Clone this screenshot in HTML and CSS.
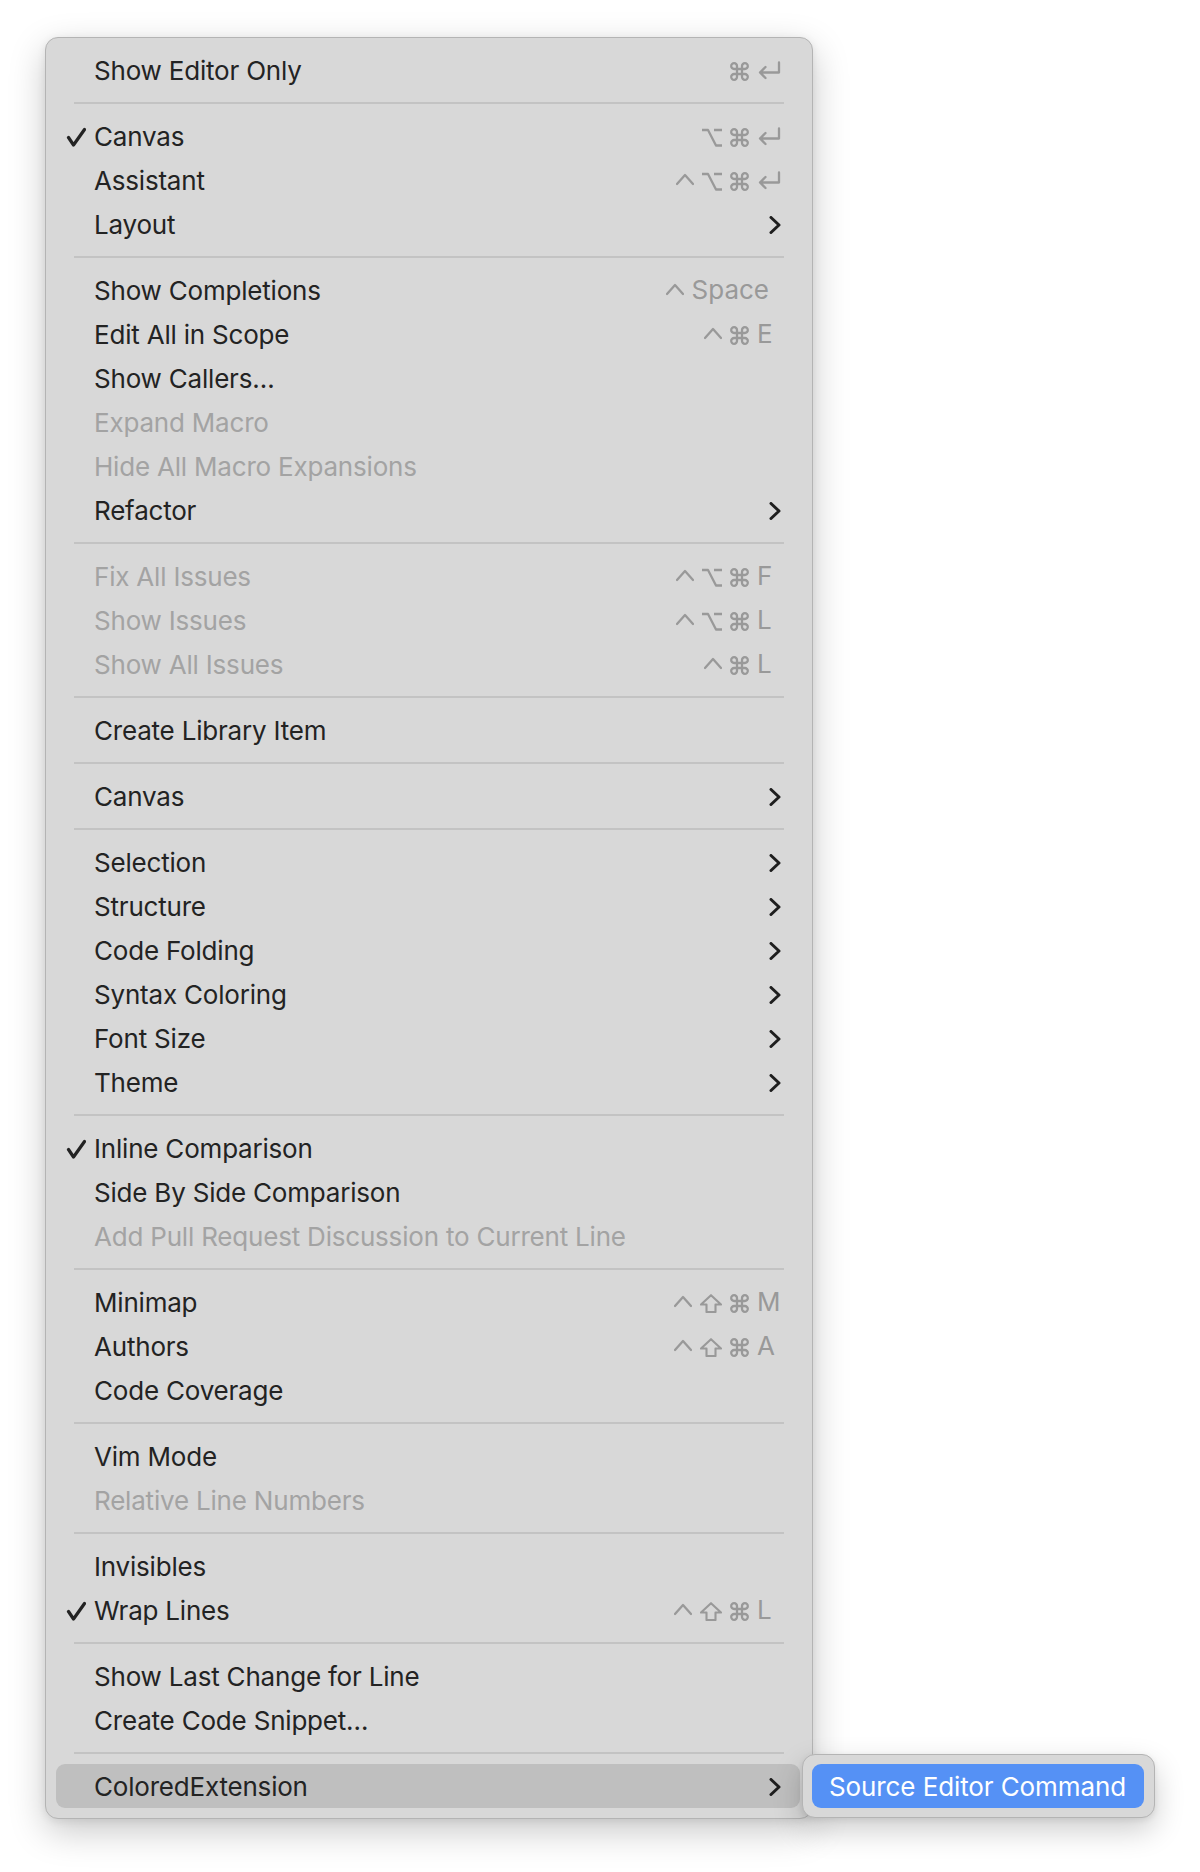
FILE: index.html
```html
<!DOCTYPE html>
<html lang="en">
<head>
  <meta charset="UTF-8">
  <title>Editor Menu</title>
  <link rel="stylesheet" href="styles.css">
</head>
<body>
  <svg width="0" height="0" class="defs">
    <defs>
      <symbol id="i-check" viewBox="0 0 20 20"><path d="M2.5 10.5 L7.5 18 L18.5 2.5" /></symbol>
      <symbol id="i-chev" viewBox="0 0 12 18"><path d="M2 1.5 L10 9 L2 16.5" /></symbol>
      <symbol id="i-ctrl" viewBox="0 0 18 19"><path d="M1 12 L9 3 L17 12" /></symbol>
      <symbol id="i-opt" viewBox="0 0 20 19"><path d="M0 2 H6 L14 17.5 H20 M12 2 H20" /></symbol>
      <symbol id="i-shift" viewBox="0 0 22 19"><path d="M11 1.2 L21 10.5 H15.5 V18 H6.5 V10.5 H1 Z" /></symbol>
      <symbol id="i-cmd" viewBox="0 0 19 19"><path d="M7 7 V4.2 A2.9 2.9 0 1 0 4.2 7 H14.8 A2.9 2.9 0 1 0 12 4.2 V14.8 A2.9 2.9 0 1 0 14.8 12 H4.2 A2.9 2.9 0 1 0 7 14.8 Z" /></symbol>
      <symbol id="i-ret" viewBox="0 0 24 19"><path d="M22 1.5 V11.5 H3 M8.5 6 L3 11.5 L8.5 17" /></symbol>
    </defs>
  </svg>

  <div class="page">
    <div class="menu">

      <div class="item"><span class="mark"></span><span class="label">Show Editor Only</span>
        <span class="keys"><svg class="k cmd"><use href="#i-cmd"/></svg><span class="key"><svg class="k ret"><use href="#i-ret"/></svg></span></span></div>
      <div class="sep"></div>

      <div class="item"><span class="mark"><svg class="check"><use href="#i-check"/></svg></span><span class="label">Canvas</span>
        <span class="keys"><svg class="k opt"><use href="#i-opt"/></svg><svg class="k cmd"><use href="#i-cmd"/></svg><span class="key"><svg class="k ret"><use href="#i-ret"/></svg></span></span></div>
      <div class="item"><span class="mark"></span><span class="label">Assistant</span>
        <span class="keys"><svg class="k ctrl"><use href="#i-ctrl"/></svg><svg class="k opt"><use href="#i-opt"/></svg><svg class="k cmd"><use href="#i-cmd"/></svg><span class="key"><svg class="k ret"><use href="#i-ret"/></svg></span></span></div>
      <div class="item"><span class="mark"></span><span class="label">Layout</span><svg class="chev"><use href="#i-chev"/></svg></div>
      <div class="sep"></div>

      <div class="item"><span class="mark"></span><span class="label">Show Completions</span>
        <span class="keys"><svg class="k ctrl"><use href="#i-ctrl"/></svg><span class="key wide">Space</span></span></div>
      <div class="item"><span class="mark"></span><span class="label">Edit All in Scope</span>
        <span class="keys"><svg class="k ctrl"><use href="#i-ctrl"/></svg><svg class="k cmd"><use href="#i-cmd"/></svg><span class="key">E</span></span></div>
      <div class="item"><span class="mark"></span><span class="label">Show Callers…</span></div>
      <div class="item off"><span class="mark"></span><span class="label">Expand Macro</span></div>
      <div class="item off"><span class="mark"></span><span class="label">Hide All Macro Expansions</span></div>
      <div class="item"><span class="mark"></span><span class="label">Refactor</span><svg class="chev"><use href="#i-chev"/></svg></div>
      <div class="sep"></div>

      <div class="item off"><span class="mark"></span><span class="label">Fix All Issues</span>
        <span class="keys"><svg class="k ctrl"><use href="#i-ctrl"/></svg><svg class="k opt"><use href="#i-opt"/></svg><svg class="k cmd"><use href="#i-cmd"/></svg><span class="key">F</span></span></div>
      <div class="item off"><span class="mark"></span><span class="label">Show Issues</span>
        <span class="keys"><svg class="k ctrl"><use href="#i-ctrl"/></svg><svg class="k opt"><use href="#i-opt"/></svg><svg class="k cmd"><use href="#i-cmd"/></svg><span class="key">L</span></span></div>
      <div class="item off"><span class="mark"></span><span class="label">Show All Issues</span>
        <span class="keys"><svg class="k ctrl"><use href="#i-ctrl"/></svg><svg class="k cmd"><use href="#i-cmd"/></svg><span class="key">L</span></span></div>
      <div class="sep"></div>

      <div class="item"><span class="mark"></span><span class="label">Create Library Item</span></div>
      <div class="sep"></div>

      <div class="item"><span class="mark"></span><span class="label">Canvas</span><svg class="chev"><use href="#i-chev"/></svg></div>
      <div class="sep"></div>

      <div class="item"><span class="mark"></span><span class="label">Selection</span><svg class="chev"><use href="#i-chev"/></svg></div>
      <div class="item"><span class="mark"></span><span class="label">Structure</span><svg class="chev"><use href="#i-chev"/></svg></div>
      <div class="item"><span class="mark"></span><span class="label">Code Folding</span><svg class="chev"><use href="#i-chev"/></svg></div>
      <div class="item"><span class="mark"></span><span class="label">Syntax Coloring</span><svg class="chev"><use href="#i-chev"/></svg></div>
      <div class="item"><span class="mark"></span><span class="label">Font Size</span><svg class="chev"><use href="#i-chev"/></svg></div>
      <div class="item"><span class="mark"></span><span class="label">Theme</span><svg class="chev"><use href="#i-chev"/></svg></div>
      <div class="sep"></div>

      <div class="item"><span class="mark"><svg class="check"><use href="#i-check"/></svg></span><span class="label">Inline Comparison</span></div>
      <div class="item"><span class="mark"></span><span class="label">Side By Side Comparison</span></div>
      <div class="item off"><span class="mark"></span><span class="label">Add Pull Request Discussion to Current Line</span></div>
      <div class="sep"></div>

      <div class="item"><span class="mark"></span><span class="label">Minimap</span>
        <span class="keys"><svg class="k ctrl"><use href="#i-ctrl"/></svg><svg class="k shift"><use href="#i-shift"/></svg><svg class="k cmd"><use href="#i-cmd"/></svg><span class="key">M</span></span></div>
      <div class="item"><span class="mark"></span><span class="label">Authors</span>
        <span class="keys"><svg class="k ctrl"><use href="#i-ctrl"/></svg><svg class="k shift"><use href="#i-shift"/></svg><svg class="k cmd"><use href="#i-cmd"/></svg><span class="key">A</span></span></div>
      <div class="item"><span class="mark"></span><span class="label">Code Coverage</span></div>
      <div class="sep"></div>

      <div class="item"><span class="mark"></span><span class="label">Vim Mode</span></div>
      <div class="item off"><span class="mark"></span><span class="label">Relative Line Numbers</span></div>
      <div class="sep"></div>

      <div class="item"><span class="mark"></span><span class="label">Invisibles</span></div>
      <div class="item"><span class="mark"><svg class="check"><use href="#i-check"/></svg></span><span class="label">Wrap Lines</span>
        <span class="keys"><svg class="k ctrl"><use href="#i-ctrl"/></svg><svg class="k shift"><use href="#i-shift"/></svg><svg class="k cmd"><use href="#i-cmd"/></svg><span class="key">L</span></span></div>
      <div class="sep"></div>

      <div class="item"><span class="mark"></span><span class="label">Show Last Change for Line</span></div>
      <div class="item"><span class="mark"></span><span class="label">Create Code Snippet…</span></div>
      <div class="sep"></div>

      <div class="item open"><span class="mark"></span><span class="label">ColoredExtension</span><svg class="chev"><use href="#i-chev"/></svg>
        <div class="submenu">
          <div class="subitem">Source Editor Command</div>
        </div>
      </div>

    </div>
  </div>
</body>
</html>
```

FILE: styles.css
```css
body {
  margin: 0;
  background: #ffffff;
  font-family: 'Inter', 'Noto Sans', sans-serif;
  height: 1872px;
  overflow: hidden;
}

.defs {
  position: absolute;
  width: 0;
  height: 0;
}

.page {
  padding: 37px 0 0 45px;
}

.menu {
  width: 744px;
  padding: 10px 12px 10px 10px;
  background: #d8d8d8;
  border: 1px solid #b4b4b4;
  border-radius: 13px;
  box-shadow: 0 12px 36px rgba(0,0,0,0.22), 0 2px 8px rgba(0,0,0,0.08);
}

.item {
  position: relative;
  display: flex;
  align-items: center;
  height: 44px;
  padding: 0 19px 0 10px;
  font-size: 26px;
  letter-spacing: -0.2px;
  color: #232323;
  border-radius: 9px;
}

.item.off {
  color: #a3a3a3;
}

.item.open {
  background: #bfbfbf;
}

.mark {
  flex: none;
  width: 28px;
  height: 44px;
  display: flex;
  align-items: center;
}

.check {
  width: 20px;
  height: 20px;
  margin: 1px 0 0 0;
  fill: none;
  stroke: #232323;
  stroke-width: 3.2;
  stroke-linecap: round;
  stroke-linejoin: round;
}

.label {
  flex: 1;
  white-space: nowrap;
}

.chev {
  width: 12px;
  height: 18px;
  margin-top: 1px;
  fill: none;
  stroke: #1e1e1e;
  stroke-width: 3;
  stroke-linecap: round;
  stroke-linejoin: round;
}

.keys {
  display: flex;
  align-items: center;
  gap: 8px;
  color: #999999;
  margin-top: 2px;
  letter-spacing: 0;
}

.k {
  height: 19px;
  fill: none;
  stroke: #999999;
  stroke-width: 2.3;
  stroke-linejoin: round;
}

.k.ctrl { width: 18px; stroke-linecap: round; }
.k.opt { width: 20px; }
.k.shift { width: 22px; stroke-width: 2.1; }
.k.cmd { width: 19px; stroke-width: 2.3; }
.k.ret { width: 24px; stroke-linecap: round; }

.key {
  width: 24px;
  display: flex;
  align-items: center;
  line-height: 1;
  margin-top: -2px;
}

.key.wide {
  width: auto;
  margin-right: 12px;
}

.sep {
  height: 2px;
  margin: 10px 16px 10px 18px;
  background: #c3c3c3;
}

.submenu {
  position: absolute;
  left: 746px;
  top: -10px;
  width: 332px;
  padding: 9px 10px 9px 9px;
  background: #d8d8d8;
  border: 1px solid #b4b4b4;
  border-radius: 13px;
  box-shadow: 0 12px 30px rgba(0,0,0,0.2), 0 2px 6px rgba(0,0,0,0.08);
  letter-spacing: -0.1px;
}

.subitem {
  height: 44px;
  display: flex;
  align-items: center;
  padding-left: 17px;
  background: #5591f5;
  color: #ffffff;
  font-size: 26px;
  border-radius: 9px;
}
```
